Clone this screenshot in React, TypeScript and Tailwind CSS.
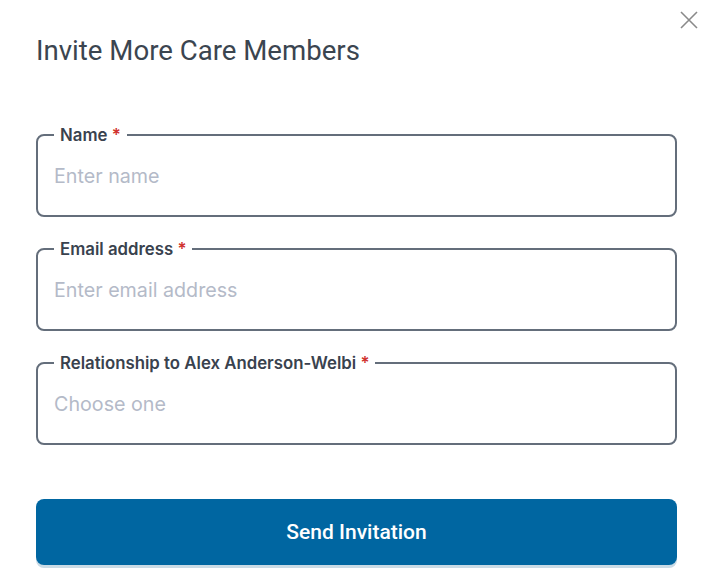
import React from "react";

function Field({ label, placeholder }: { label: string; placeholder: string }) {
  return (
    <fieldset className="border-2 border-[#646e7b] rounded-[8px] px-[16px] pb-[6px] m-0 min-w-0">
      <legend className="px-[6px] text-[16.8px] leading-[18px] font-semibold text-[#39424e] font-['Inter',sans-serif]">
        {label} <span className="text-[#d0312d]">*</span>
      </legend>
      <div className="h-[65px] pt-[1px] flex items-center text-[19.7px] text-[#b4bac8] font-['Inter',sans-serif]">
        {placeholder}
      </div>
    </fieldset>
  );
}

export default function App() {
  return (
    <div className="w-[706px] h-[582px] bg-white relative font-['Roboto',sans-serif]">
      <button className="absolute left-[680px] top-[11px] w-[18px] h-[18px] text-[#8a8a8a]">
        <svg width="18" height="18" viewBox="0 0 18 18" fill="none" stroke="currentColor" strokeWidth="1.6">
          <path d="M1 1L17 17M17 1L1 17" />
        </svg>
      </button>
      <div className="px-[36px] pr-[29px] pt-[34px]">
        <h1 className="text-[27.6px] leading-[34px] text-[#3b4550] font-normal">Invite More Care Members</h1>
        <div className="mt-[58px] flex flex-col gap-[23px]">
          <Field label="Name" placeholder="Enter name" />
          <Field label="Email address" placeholder="Enter email address" />
          <Field label="Relationship to Alex Anderson-Welbi" placeholder="Choose one" />
        </div>
        <button className="mt-[54px] w-full h-[66px] pt-[1px] rounded-[8px] bg-[#0066a1] text-white text-[21px] font-medium shadow-[0_3px_0_#c9dbe6]">
          Send Invitation
        </button>
      </div>
    </div>
  );
}
